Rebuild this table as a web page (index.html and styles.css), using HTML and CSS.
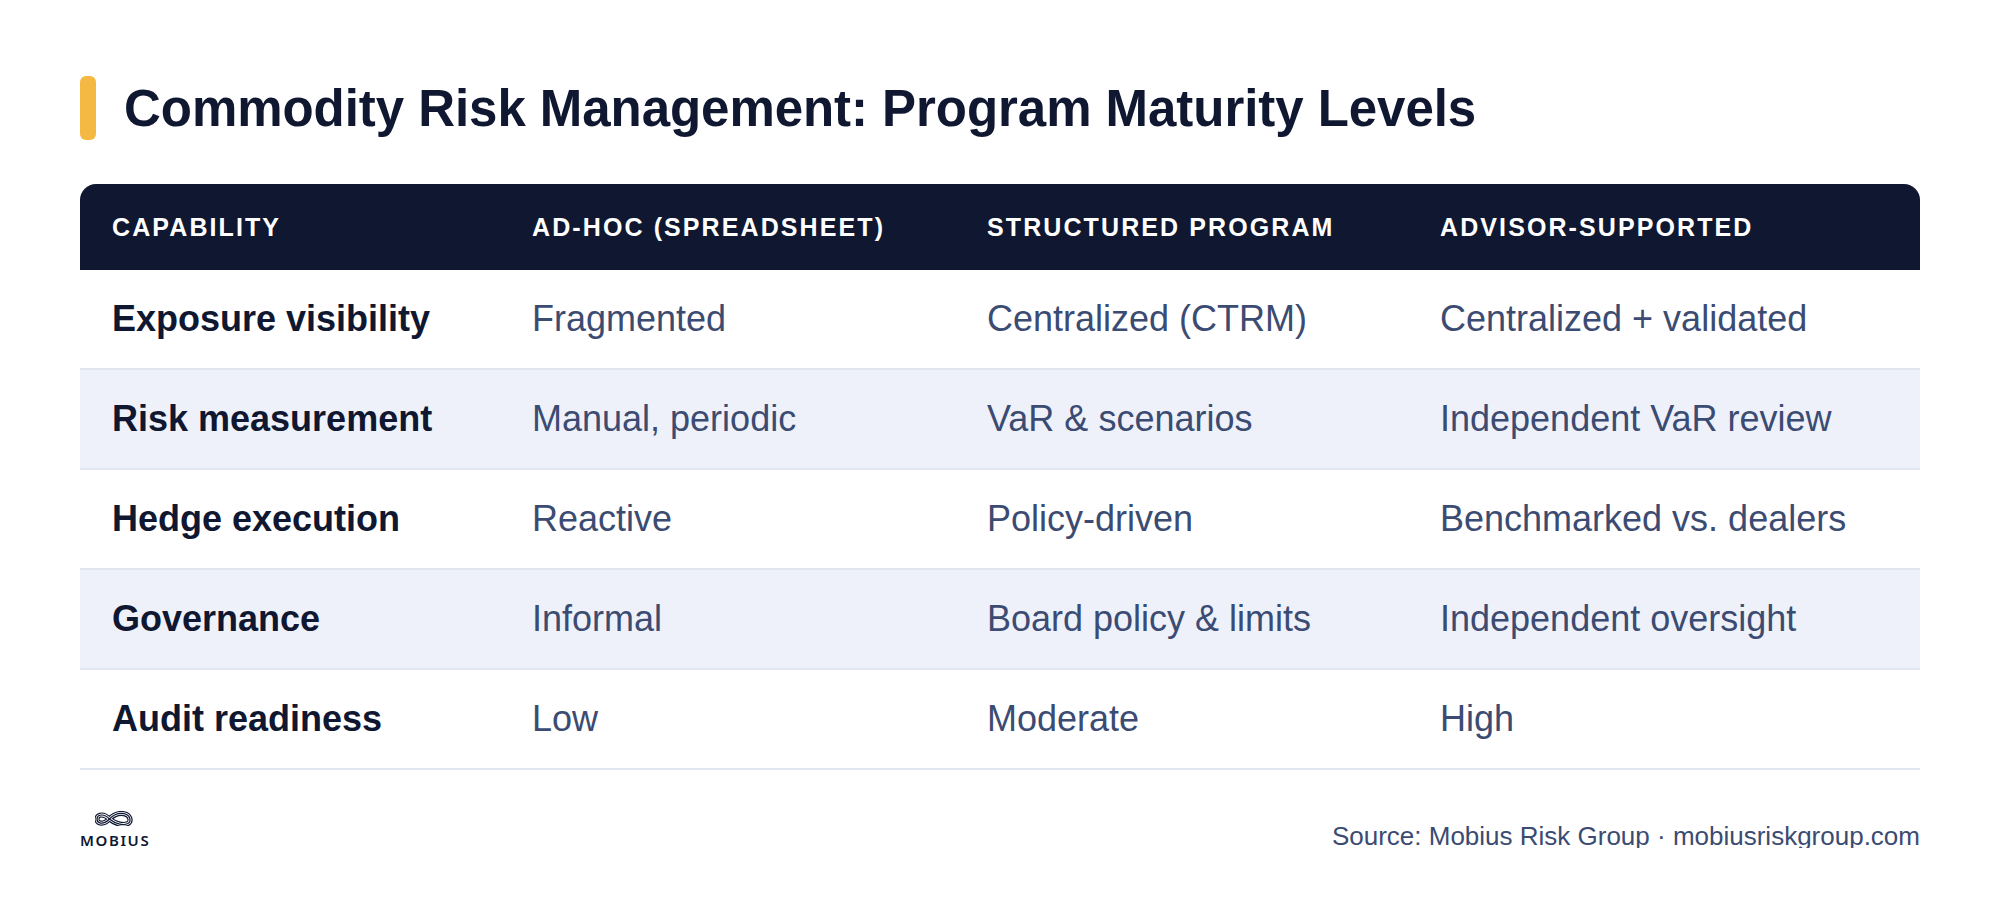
FILE: index.html
```html
<!DOCTYPE html>
<html lang="en">
<head>
<meta charset="utf-8">
<title>Commodity Risk Management: Program Maturity Levels</title>
<link rel="stylesheet" href="styles.css">
</head>
<body>
<main class="page">
  <header class="title-row">
    <span class="accent"></span>
    <h1 class="title">Commodity Risk Management: Program Maturity Levels</h1>
  </header>

  <section class="table">
    <div class="row head">
      <div class="cell">CAPABILITY</div>
      <div class="cell">AD-HOC (SPREADSHEET)</div>
      <div class="cell">STRUCTURED PROGRAM</div>
      <div class="cell">ADVISOR-SUPPORTED</div>
    </div>
    <div class="row">
      <div class="cell label">Exposure visibility</div>
      <div class="cell">Fragmented</div>
      <div class="cell">Centralized (CTRM)</div>
      <div class="cell">Centralized + validated</div>
    </div>
    <div class="row alt">
      <div class="cell label">Risk measurement</div>
      <div class="cell">Manual, periodic</div>
      <div class="cell">VaR &amp; scenarios</div>
      <div class="cell">Independent VaR review</div>
    </div>
    <div class="row">
      <div class="cell label">Hedge execution</div>
      <div class="cell">Reactive</div>
      <div class="cell">Policy-driven</div>
      <div class="cell">Benchmarked vs. dealers</div>
    </div>
    <div class="row alt">
      <div class="cell label">Governance</div>
      <div class="cell">Informal</div>
      <div class="cell">Board policy &amp; limits</div>
      <div class="cell">Independent oversight</div>
    </div>
    <div class="row">
      <div class="cell label">Audit readiness</div>
      <div class="cell">Low</div>
      <div class="cell">Moderate</div>
      <div class="cell">High</div>
    </div>
  </section>

  <footer class="footer">
    <div class="logo">
      <svg class="logo-mark" width="38" height="15" viewBox="2.2 0.4 33.8 13.4" aria-hidden="true">
        <path class="ribbon-outer" d="M15 7.5 C12 4.5 9 3.5 6.5 4.2 C3.2 5 2.8 10.2 6.5 11 C9 11.7 12 10.5 15 7.5 C19 3.5 23.5 2 28 2.8 C33.5 3.8 35 9.6 31.5 11.6 C28 13.4 21 12.5 15 7.5 Z"/>
        <path class="ribbon-gap" d="M15 7.5 C12 4.5 9 3.5 6.5 4.2 C3.2 5 2.8 10.2 6.5 11 C9 11.7 12 10.5 15 7.5 C19 3.5 23.5 2 28 2.8 C33.5 3.8 35 9.6 31.5 11.6 C28 13.4 21 12.5 15 7.5 Z"/>
        <path class="ribbon-inner" d="M15 7.5 C12 4.5 9 3.5 6.5 4.2 C3.2 5 2.8 10.2 6.5 11 C9 11.7 12 10.5 15 7.5 C19 3.5 23.5 2 28 2.8 C33.5 3.8 35 9.6 31.5 11.6 C28 13.4 21 12.5 15 7.5 Z"/>
      </svg>
      <span class="logo-text">MOBIUS</span>
    </div>
    <p class="source">Source: Mobius Risk Group · mobiusriskgroup.com</p>
  </footer>
</main>
</body>
</html>
```

FILE: styles.css
```css
* {
  box-sizing: border-box;
}

html, body {
  margin: 0;
  padding: 0;
  background: #ffffff;
}

body {
  font-family: "Liberation Sans", Arial, sans-serif;
  color: #0f1731;
}

.page {
  padding: 76px 80px 0 80px;
}

.title-row {
  display: flex;
  align-items: center;
  gap: 28px;
  height: 64px;
}

.accent {
  flex: none;
  width: 16px;
  height: 64px;
  border-radius: 6px;
  background: #f4b942;
}

.title {
  margin: 0;
  font-size: 51px;
  font-weight: 700;
  line-height: 1;
  letter-spacing: -0.05px;
  color: #0f1731;
}

.table {
  margin-top: 44px;
}

.row {
  display: grid;
  grid-template-columns: 420px 455px 453px 1fr;
  align-items: center;
  height: 100px;
  border-bottom: 2px solid #e1e5ef;
  background: #ffffff;
}

.row.alt {
  background: #eef1fa;
}

.row.head {
  height: 86px;
  background: #0f1731;
  border-bottom: none;
  border-radius: 16px 16px 0 0;
}

.cell {
  padding: 0 32px;
  font-size: 36px;
  line-height: 1.2;
  color: #3b4b72;
  white-space: nowrap;
}

.cell.label {
  font-weight: 700;
  color: #0f1731;
}

.head .cell {
  font-size: 25px;
  font-weight: 700;
  letter-spacing: 2.1px;
  color: #ffffff;
}

.footer {
  display: flex;
  justify-content: space-between;
  align-items: flex-end;
  margin-top: 41px;
}

.logo {
  display: flex;
  flex-direction: column;
  align-items: center;
  gap: 7px;
}

.logo-mark {
  display: block;
}

.ribbon-outer {
  fill: none;
  stroke: #0f1731;
  stroke-width: 4.6;
}

.ribbon-gap {
  fill: none;
  stroke: #ffffff;
  stroke-width: 2.5;
}

.ribbon-inner {
  fill: none;
  stroke: #0f1731;
  stroke-width: 1.1;
}

.logo-text {
  font-family: "Noto Sans", "DejaVu Sans", sans-serif;
  font-size: 15px;
  font-weight: 600;
  letter-spacing: 1.6px;
  margin-right: -1.6px;
  line-height: 1;
  color: #0f1731;
}

.source {
  margin: 0 0 -4px 0;
  font-size: 26px;
  line-height: 1.2;
  color: #3b4b72;
}
```
